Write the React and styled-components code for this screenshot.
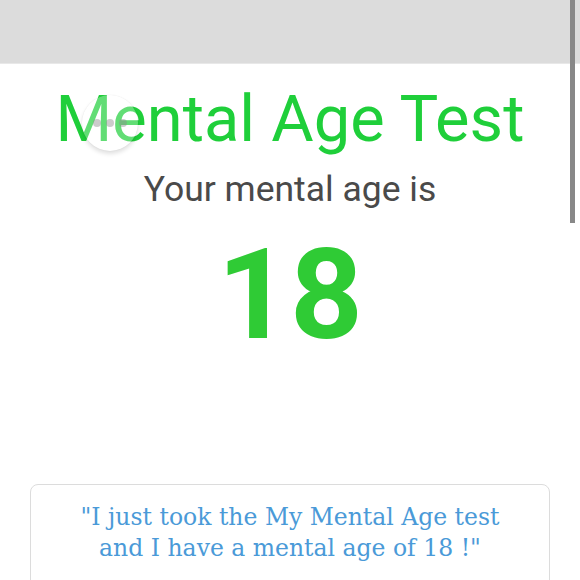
import React from 'react';
import styled, { createGlobalStyle } from 'styled-components';

const Global = createGlobalStyle`
  html, body {
    margin: 0;
    padding: 0;
    background: #fff;
    overflow: hidden;
  }
  body {
    font-family: Roboto, "Noto Sans", sans-serif;
  }
`;

const Page = styled.div`
  position: relative;
  width: 580px;
  height: 580px;
  overflow: hidden;
`;

const TopBar = styled.div`
  height: 63px;
  background: #dcdcdc;
  border-bottom: 1px solid #e8e8e8;
`;

const Main = styled.main`
  display: flex;
  flex-direction: column;
  align-items: center;
`;

const Title = styled.h1`
  margin: 17px 0 0;
  font-family: Roboto, sans-serif;
  font-weight: 400;
  font-size: 65px;
  line-height: 76px;
  color: #1fcf3a;
`;

const Subtitle = styled.p`
  margin: 10px 0 0;
  font-family: Roboto, sans-serif;
  font-size: 35.5px;
  line-height: 44px;
  color: #4a4a4a;
`;

const Age = styled.div`
  margin-top: 14px;
  font-family: Roboto, sans-serif;
  font-weight: 700;
  font-size: 127px;
  line-height: 140px;
  color: #2fcb35;
`;

const ShareCard = styled.div`
  margin-top: 119px;
  width: 520px;
  box-sizing: border-box;
  border: 1px solid #dcdcdc;
  border-radius: 8px;
  padding: 17px 12px 40px;
  text-align: center;
`;

const Quote = styled.p`
  margin: 0;
  font-family: "DejaVu Serif", "Liberation Serif", serif;
  font-size: 23.5px;
  line-height: 31px;
  color: #4a9ad8;
`;

const Loader = styled.div`
  position: absolute;
  left: 82px;
  top: 95px;
  width: 56px;
  height: 56px;
  border-radius: 50%;
  background: rgba(255, 255, 255, 0.3);
  box-shadow: 0 0 1px rgba(0, 0, 0, 0.12), 0 3px 4px rgba(0, 0, 0, 0.12);
  display: flex;
  align-items: center;
  justify-content: center;
  gap: 5px;
`;

const Dot = styled.span`
  width: 8px;
  height: 8px;
  border-radius: 50%;
  background: rgba(140, 140, 140, 0.45);
`;

const Scrollbar = styled.div`
  position: absolute;
  top: 0;
  right: 5px;
  width: 5px;
  height: 223px;
  background: #888;
`;

export default function App() {
  return (
    <Page>
      <Global />
      <TopBar />
      <Main>
        <Title>Mental Age Test</Title>
        <Subtitle>Your mental age is</Subtitle>
        <Age>18</Age>
        <ShareCard>
          <Quote>
            "I just took the My Mental Age test
            <br />
            and I have a mental age of 18 !"
          </Quote>
        </ShareCard>
      </Main>
      <Loader>
        <Dot />
        <Dot />
        <Dot />
      </Loader>
      <Scrollbar />
    </Page>
  );
}
